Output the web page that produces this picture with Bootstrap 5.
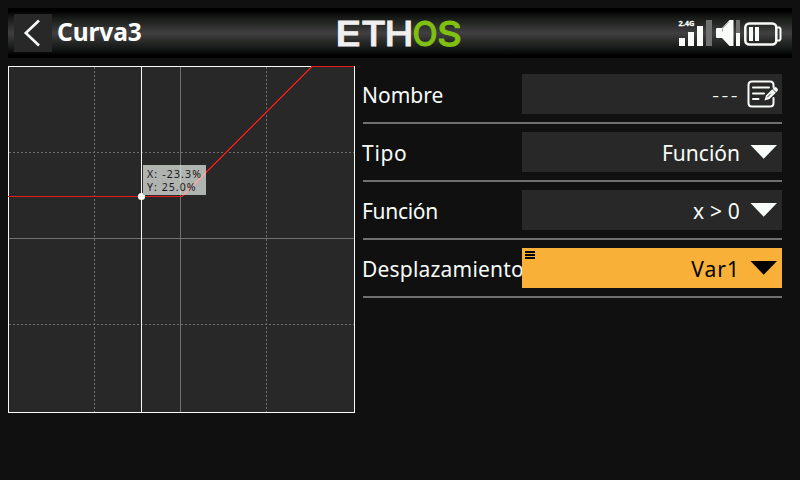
<!DOCTYPE html>
<html lang="es" data-bs-theme="dark">
<head>
<meta charset="utf-8">
<meta name="viewport" content="width=device-width, initial-scale=1">
<title>Curva3</title>
<link href="https://cdn.jsdelivr.net/npm/bootstrap@5.3.0/dist/css/bootstrap.min.css" rel="stylesheet">
<style>
body{background:#101010;color:#f8fcf8;font-family:"Noto Sans",sans-serif;width:800px;height:480px;overflow:hidden;padding:8px}
svg{display:block;flex:none}
.topbar{height:50px;padding:0 10px 0 6px;background:linear-gradient(#000 0,#000 6%,#181a18 20%,#2a2c2a 34%,#404040 50%,#2c2e2c 64%,#161a18 80%,#000 95%,#000)}
.back{width:38px;height:38px;background:#282828;border:0;padding:0}
.title{font-size:24.5px;font-weight:700;line-height:36px;margin:0 0 2px 5px;letter-spacing:-.1px;width:275px}
.main{margin-top:8px;gap:7px}
.form-rows{width:420px}
.setting{height:58px;padding-top:8px;margin-left:1px;font-size:21px;line-height:40px;border-bottom:2px solid #707070}
.setting-name{width:160px;margin-left:-1px;padding-top:1px;white-space:nowrap}
.tight{letter-spacing:-.3px}
.snug{letter-spacing:.2px}
.loose{letter-spacing:.7px}
.wide{letter-spacing:1px}
.field{width:260px;height:40px;background:#282828;padding:0 4px 0 0}
.field.active{background:#f8b038;color:#000}
.field-value{padding-top:2px}
.unset{letter-spacing:2.5px;font-weight:300;margin-right:6px}
.menu-mark{left:3px;top:3px}
</style>
</head>
<body>
<header class="topbar d-flex align-items-center">
  <button class="back d-flex align-items-center justify-content-center" aria-label="Volver">
    <svg width="38" height="38" fill="none" stroke="#f8fcf8" stroke-width="2.6"><path d="M25 6.500 L11.800 19 L25 31.500"/></svg>
  </button>
  <h1 class="title">Curva3</h1>
  <svg width="134" height="50" font-family="Inter, sans-serif" font-weight="500" font-size="34.500">
    <g fill="#f0f0f0" stroke="#f0f0f0" stroke-width=".8">
      <text transform="translate(3 37.600) scale(1.270 1)">E</text>
      <text transform="translate(29 37.600) scale(1.120 1)">T</text>
      <text transform="translate(52.500 37.600) scale(1.130 1)">H</text>
    </g>
    <g fill="#80c010" stroke="#80c010" stroke-width="1">
      <text x="80.500" y="37.600" textLength="25" lengthAdjust="spacingAndGlyphs">O</text>
      <text transform="translate(105.300 37.600) scale(1.100 1)">S</text>
    </g>
  </svg>
  <svg class="ms-auto" width="104" height="38" fill="#f8fcf8">
    <text x="0.500" y="12" font-size="7" font-weight="700" textLength="16" lengthAdjust="spacingAndGlyphs" stroke="#f8fcf8" stroke-width=".3">2.4G</text>
    <path d="M1 24h6v8H1zM10 18h6v14h-6zM19 12h6v20h-6z"/>
    <path d="M28 6h6v26h-6zM58 6h4v13h-4z" fill="#707070"/>
    <path d="M39 14h5l7.500-8h4v26h-4l-7.500-8h-5q-1 0-1-1v-8q0-1 1-1zM58 19h4v13h-4z"/>
    <path d="M44.500 14.500v3M45 14l6-6.500" stroke="#a0a4a0" fill="none"/>
    <rect x="67.300" y="9.500" width="31" height="21" rx="4" fill="none" stroke="#f8fcf8" stroke-width="2.500"/>
    <path d="M99 13.500h2.500l1 1.500v10l-1 1.500h-2.500" fill="none" stroke="#f8fcf8" stroke-width="2"/>
    <path d="M71 13h4v14h-4zM77 13h4v14h-4z"/>
  </svg>
</header>
<main class="main d-flex">
  <svg width="347" height="347" shape-rendering="crispEdges" fill="none">
    <rect width="347" height="347" fill="#282828"/>
    <path d="M86.500 1V346M258.500 1V346M1 86.500H346M1 258.500H346" stroke="#707070" stroke-dasharray="2 2"/>
    <path d="M172.500 1V346M1 172.500H346" stroke="#707070"/>
    <rect x=".5" y=".5" width="346" height="346" stroke="#f8fcf8"/>
    <path d="M0 130.500H174L304 .5H346" stroke="#e81c18"/>
    <path d="M133.500 0V347" stroke="#f8fcf8"/>
    <circle cx="133.500" cy="130.500" r="3.600" fill="#f8fcf8" shape-rendering="auto"/>
    <rect x="135" y="99" width="63" height="30" fill="#b0b4b0"/>
    <path d="M172.500 99V129" stroke="#c8ccc8"/>
    <path d="M175.500 129L198 106.500" stroke="#f8a8a0"/>
    <g fill="#181818" font-size="10.500" shape-rendering="auto">
      <text x="139" y="112" textLength="54">X: -23.3%</text>
      <text x="139" y="125" textLength="48.500">Y: 25.0%</text>
    </g>
  </svg>
  <section class="form-rows">
    <div class="setting d-flex"><label class="setting-name">Nombre</label>
      <div class="field d-flex align-items-center justify-content-end"><span class="field-value unset">---</span>
        <svg width="32" height="32" fill="none" stroke="#f8fcf8" stroke-width="2" stroke-linecap="round"><path d="M27.500 9V7Q27.500 3.500 24 3.500H6Q2.500 3.500 2.500 7V25Q2.500 28.500 6 28.500H24Q27.500 28.500 27.500 25V20M7 9.500H23M7 15.500H18M7 21H12.500"/><path d="M18.500 22.500L20 17.500L28 9.500Q29.500 8.500 31 10Q32.500 11.500 31.500 13L23.500 21Z" fill="#f8fcf8" stroke="none"/><path d="M26.500 11L30 14.500M21.500 19L24.500 16" stroke="#282828" stroke-width=".9"/></svg>
      </div></div>
    <div class="setting d-flex"><label class="setting-name loose">Tipo</label>
      <div class="field d-flex align-items-center justify-content-end"><span class="field-value me-2">Función</span>
        <svg width="30" height="40" fill="#f8fcf8"><path d="M2.500 13H29L15.700 26.700Z"/></svg></div></div>
    <div class="setting d-flex"><label class="setting-name tight">Función</label>
      <div class="field d-flex align-items-center justify-content-end"><span class="field-value snug me-2">x &gt; 0</span>
        <svg width="30" height="40" fill="#f8fcf8"><path d="M2.500 13H29L15.700 26.700Z"/></svg></div></div>
    <div class="setting d-flex"><label class="setting-name snug">Desplazamiento</label>
      <div class="field active position-relative d-flex align-items-center justify-content-end">
        <svg class="menu-mark position-absolute" width="10" height="8"><path d="M0 0h10v2H0zM0 3h10v2H0zM0 6h10v2H0z"/></svg>
        <span class="field-value wide me-2">Var1</span>
        <svg width="30" height="40"><path d="M2.500 13H29L15.700 26.700Z"/></svg></div></div>
  </section>
</main>
<script src="https://cdn.jsdelivr.net/npm/bootstrap@5.3.0/dist/js/bootstrap.bundle.min.js"></script>
</body>
</html>
